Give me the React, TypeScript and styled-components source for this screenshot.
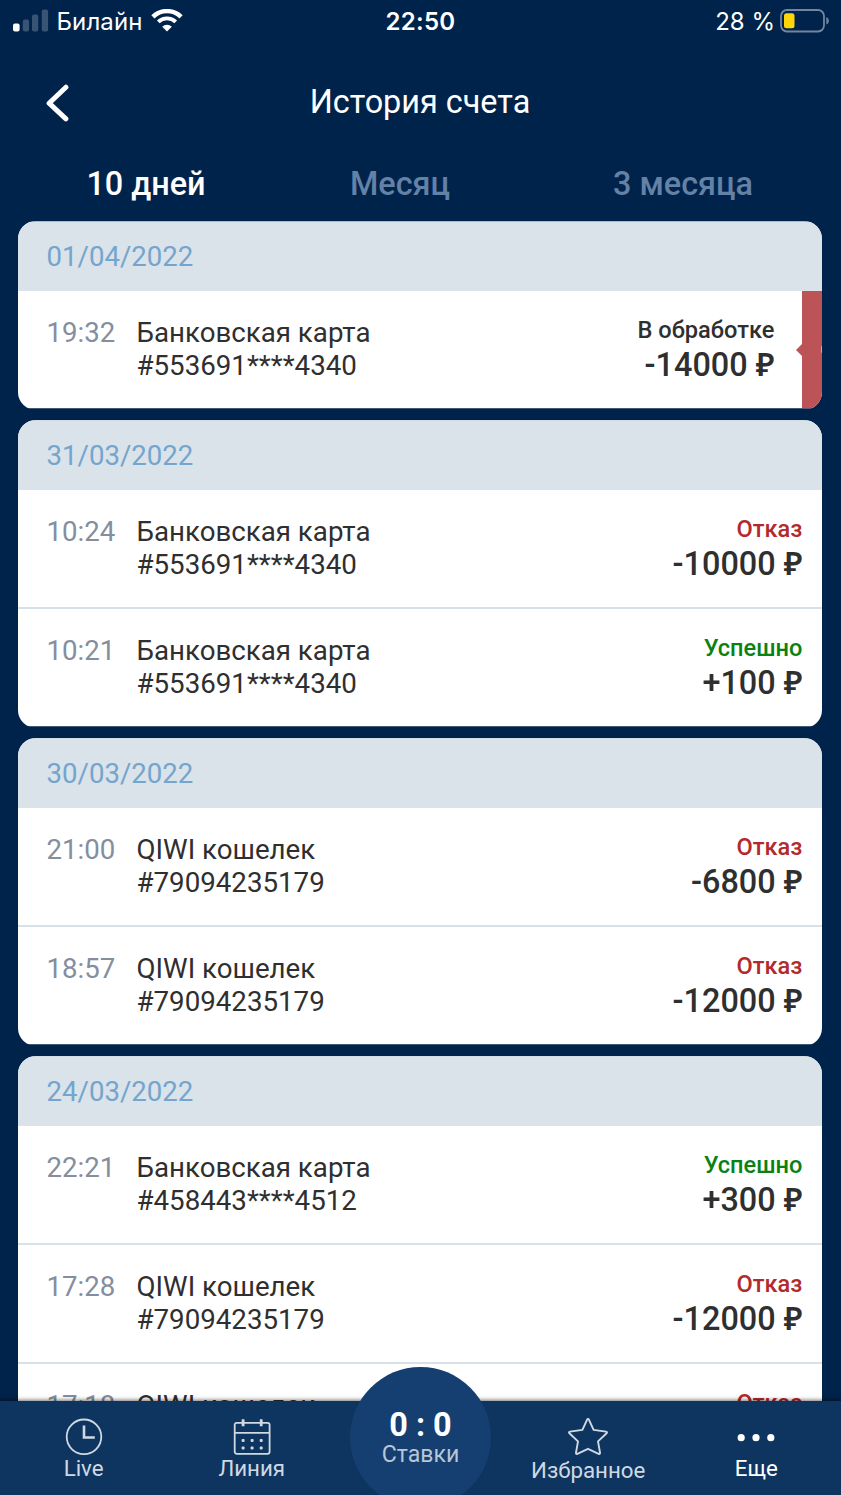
import React from 'react';
import styled, { createGlobalStyle } from 'styled-components';

const GlobalStyle = createGlobalStyle`
  * { box-sizing: border-box; }
  html, body { margin: 0; padding: 0; background: #00234b; }
  body { font-family: Roboto, "Open Sans", sans-serif; overflow: hidden; }
`;

const Screen = styled.div`
  position: relative;
  display: flex;
  flex-direction: column;
  width: 841px;
  height: 1495px;
  overflow: hidden;
  background: #00234b;
`;

const StatusBar = styled.div`
  display: grid;
  grid-template-columns: 1fr auto 1fr;
  align-items: center;
  flex: none;
  height: 42px;
  padding: 0 11px 0 13px;
  color: #fff;
  font-family: Inter, "Liberation Sans", sans-serif;
  font-size: 24px;
  line-height: 40px;
`;

const StatusSide = styled.div<{ $end?: boolean }>`
  display: flex;
  align-items: center;
  justify-content: ${(p) => (p.$end ? 'flex-end' : 'flex-start')};
  svg { display: block; flex: none; margin-bottom: 1px; }
`;

const Carrier = styled.span`
  margin: 1px 9px 0 7.5px;
  letter-spacing: 0.1px;
`;

const Clock = styled.span`
  margin: 1px 2px 0 0;
  font-weight: 600;
  letter-spacing: 0.3px;
`;

const Charge = styled.span`
  margin: 1px 5px 0 0;
`;

const Header = styled.header`
  display: grid;
  grid-template-columns: 100px 1fr 100px;
  align-items: center;
  flex: none;
  height: 118px;
`;

const BackButton = styled.button`
  display: flex;
  padding: 3px 0 0 44px;
  border: 0;
  background: none;
`;

const Title = styled.h1`
  margin: 2px 1px 0 0;
  color: #fff;
  font-size: 32.4px;
  font-weight: 400;
  line-height: 40px;
  text-align: center;
`;

const Periods = styled.nav`
  display: grid;
  grid-template-columns: 256px 252px 314px;
  flex: none;
  height: 61px;
  padding: 4px 0 0 18px;
`;

const Period = styled.button<{ $active?: boolean }>`
  height: 40px;
  padding: 0;
  border: 0;
  background: none;
  color: ${(p) => (p.$active ? '#fff' : '#6481a6')};
  font: 500 32.4px/40px Roboto, sans-serif;
`;

const Cards = styled.main`
  display: flex;
  flex-direction: column;
  flex: none;
  gap: 10px;
  padding: 0.4px 18.6px 0 18px;
`;

/* The last two pixels are clipped, so the bottom corners end in a slight kink. */
const Card = styled.section`
  overflow: hidden;
  border-radius: 18px;
  background: #fff;
  clip-path: inset(0 0 2px 0);
`;

const DateBar = styled.h2`
  height: 69.8px;
  margin: 0;
  padding: 1px 28.5px 0;
  background: #dae2ea;
  color: #74a5cc;
  font-size: 27.6px;
  font-weight: 400;
  line-height: 69.6px;
`;

const Row = styled.div`
  display: flex;
  height: 119.1px;
  padding: 25px 20px 0 28.5px;
  border-bottom: 2px solid #d8e1ea;
  &:last-child { border-bottom-color: transparent; }
`;

const Time = styled.div`
  width: 90px;
  color: #848e9e;
  font-size: 27.6px;
  line-height: 33px;
`;

const Method = styled.div`
  flex: 1;
  color: #2f2f2f;
  font-size: 27.7px;
  line-height: 33px;
`;

const Result = styled.div`
  text-align: right;
  font-weight: 500;
`;

const tones = { wait: '#2f2f2f', fail: '#b32a2e', done: '#0a8212' };
type Tone = keyof typeof tones;

const State = styled.div<{ $tone: Tone }>`
  height: 30px;
  color: ${(p) => tones[p.$tone]};
  font-size: 23.6px;
  line-height: 28px;
`;

const Amount = styled.div`
  color: #2f2f2f;
  font-size: 32.4px;
  line-height: 39px;
`;

const Currency = styled.span`
  font-family: "Noto Sans", sans-serif;
  font-weight: 600;
  font-size: 31.5px;
  line-height: 1;
`;

const CancelHandle = styled.div`
  position: relative;
  width: 20px;
  height: 120px;
  margin: -25px -20px 0 28px;
  background: #bc5457;
  overflow: visible;
  &::before {
    content: '';
    position: absolute;
    left: -6px;
    top: 53px;
    border: 6px solid transparent;
    border-left-width: 0;
    border-right-color: #bc5457;
  }
  &::after {
    content: '';
    position: absolute;
    right: 0;
    top: 55px;
    width: 1.5px;
    height: 7px;
    border-radius: 2px 0 0 2px;
    background: #dca5a7;
  }
`;

const TabBar = styled.nav`
  position: absolute;
  left: 0;
  right: 0;
  bottom: 0;
  display: grid;
  grid-template-columns: repeat(5, 1fr);
  height: 94px;
  background: #0e355f;
  box-shadow: 0 -1px 4px rgba(0, 0, 0, 0.55);
`;

const Tab = styled.button<{ $bright?: boolean }>`
  display: flex;
  flex-direction: column;
  align-items: center;
  padding: 15px 1px 0 0;
  border: 0;
  background: none;
  color: ${(p) => (p.$bright ? '#fff' : '#d0d9e3')};
  font: 400 22.3px/28px Roboto, sans-serif;
  white-space: nowrap;
  svg { display: block; flex: none; height: 39px; }
`;

const TabLabel = styled.span<{ $drop?: number }>`
  margin-top: ${(p) => (p.$drop ?? 0) - 1}px;
`;

const BetSlip = styled.button`
  display: flex;
  flex-direction: column;
  align-items: center;
  justify-self: center;
  width: 141px;
  height: 141px;
  margin-top: -34px;
  padding: 41.5px 0 0;
  border: 0;
  border-radius: 50%;
  background: #143f70;
  color: #b9c6d6;
  font: 400 23.1px/28px Roboto, sans-serif;
`;

const Score = styled.strong`
  color: #fff;
  font-size: 32.4px;
  font-weight: 700;
  line-height: 32px;
`;

interface Operation {
  time: string;
  method: string;
  account: string;
  state: string;
  tone: Tone;
  amount: string;
  cancellable?: boolean;
}

const card = 'Банковская карта';
const qiwi = 'QIWI кошелек';

const days: { date: string; items: Operation[] }[] = [
  {
    date: '01/04/2022',
    items: [
      { time: '19:32', method: card, account: '#553691****4340', state: 'В обработке', tone: 'wait', amount: '-14000', cancellable: true },
    ],
  },
  {
    date: '31/03/2022',
    items: [
      { time: '10:24', method: card, account: '#553691****4340', state: 'Отказ', tone: 'fail', amount: '-10000' },
      { time: '10:21', method: card, account: '#553691****4340', state: 'Успешно', tone: 'done', amount: '+100' },
    ],
  },
  {
    date: '30/03/2022',
    items: [
      { time: '21:00', method: qiwi, account: '#79094235179', state: 'Отказ', tone: 'fail', amount: '-6800' },
      { time: '18:57', method: qiwi, account: '#79094235179', state: 'Отказ', tone: 'fail', amount: '-12000' },
    ],
  },
  {
    date: '24/03/2022',
    items: [
      { time: '22:21', method: card, account: '#458443****4512', state: 'Успешно', tone: 'done', amount: '+300' },
      { time: '17:28', method: qiwi, account: '#79094235179', state: 'Отказ', tone: 'fail', amount: '-12000' },
      { time: '17:18', method: qiwi, account: '#79094235179', state: 'Отказ', tone: 'fail', amount: '-12000' },
    ],
  },
];

const SignalIcon = () => (
  <svg width="36" height="24" viewBox="0 0 36 24" fill="#fff">
    <rect x="0" y="14.5" width="6.6" height="8" rx="2" />
    <g opacity=".22">
      <rect x="9.8" y="10.5" width="6.3" height="12" rx="2" />
      <rect x="19" y="5.5" width="6.3" height="17" rx="2" />
      <rect x="28.8" y="0.5" width="6.3" height="22" rx="2" />
    </g>
  </svg>
);

const WifiIcon = () => (
  <svg width="32" height="24" viewBox="0 0 32 24" fill="none" stroke="#fff">
    <path d="M1.9 7.9a20 20 0 0 1 28.2 0" strokeWidth="4.5" />
    <path d="M7.3 12.9a12.4 12.4 0 0 1 17.4 0" strokeWidth="3.9" />
    <path d="M16 22.4l-4.8-4.7a6.9 6.9 0 0 1 9.6 0z" fill="#fff" stroke="none" />
  </svg>
);

const BatteryIcon = () => (
  <svg width="50" height="24" viewBox="0 0 50 24">
    <rect x="1" y="1" width="43" height="21.5" rx="6" fill="none" stroke="#74869d" strokeWidth="1.8" />
    <rect x="4" y="4.3" width="10.5" height="15" rx="2.5" fill="#ffd60a" />
    <path d="M46.3 8c3.4 1.4 3.4 6.2 0 7.6z" fill="#74869d" />
  </svg>
);

const BackIcon = () => (
  <svg width="28" height="38" viewBox="0 0 28 38" fill="none" stroke="#fff" strokeWidth="5" strokeLinecap="round" strokeLinejoin="round">
    <path d="M21.9 3.2L5.1 19.2l16.8 15.6" />
  </svg>
);

const ClockIcon = () => (
  <svg width="40" height="40" viewBox="0 0 40 39" fill="none" stroke="#d0d9e3">
    <circle cx="20" cy="20.8" r="17.3" strokeWidth="1.8" />
    <path d="M20 9.5v12h10.8" strokeWidth="2.6" />
  </svg>
);

const CalendarIcon = () => (
  <svg width="40" height="39" viewBox="0 0 40 39" fill="none" stroke="#d0d9e3" strokeWidth="1.8">
    <rect x="2.7" y="6.8" width="34.9" height="31" rx="2" />
    <path d="M2.7 16.8h34.9" />
    <path d="M11.1 3.3v7M29.2 3.3v7" strokeWidth="2.8" />
    <g fill="#d0d9e3" stroke="none">
      {[11.1, 20.1, 29.2].flatMap((x) =>
        [24.4, 32].map((y) => <rect key={`${x}-${y}`} x={x - 1.5} y={y - 1.5} width="3" height="3" rx="1" />),
      )}
    </g>
  </svg>
);

const StarIcon = () => (
  <svg width="42" height="39" viewBox="0 0 42 39" fill="none" stroke="#d0d9e3" strokeWidth="1.9" strokeLinejoin="round">
    <path d="M20 3.8q1-1.8 2 0l4.6 10.1 12.4 1.7q1.6.4.6 1.6l-8.6 8.2 2 11.3q.2 1.8-1.4 1.1L21 32.8l-10.6 5q-1.6.7-1.4-1.1L11 25.4l-8.6-8.2q-1-1.2.6-1.6l12.4-1.7z" />
  </svg>
);

const MoreIcon = () => (
  <svg width="40" height="39" viewBox="0 0 40 39" fill="#fff">
    <circle cx="5.2" cy="21.7" r="3.6" />
    <circle cx="20" cy="21.7" r="3.6" />
    <circle cx="34.8" cy="21.7" r="3.6" />
  </svg>
);

export default function App() {
  return (
    <>
      <GlobalStyle />
      <Screen>
        <StatusBar>
          <StatusSide>
            <SignalIcon />
            <Carrier>Билайн</Carrier>
            <WifiIcon />
          </StatusSide>
          <Clock>22:50</Clock>
          <StatusSide $end>
            <Charge>28 %</Charge>
            <BatteryIcon />
          </StatusSide>
        </StatusBar>
        <Header>
          <BackButton aria-label="Назад"><BackIcon /></BackButton>
          <Title>История счета</Title>
        </Header>
        <Periods>
          <Period $active>10 дней</Period>
          <Period>Месяц</Period>
          <Period>3 месяца</Period>
        </Periods>
        <Cards>
          {days.map((day) => (
            <Card key={day.date}>
              <DateBar>{day.date}</DateBar>
              {day.items.map((op) => (
                <Row key={op.time}>
                  <Time>{op.time}</Time>
                  <Method>
                    {op.method}
                    <br />
                    {op.account}
                  </Method>
                  <Result>
                    <State $tone={op.tone}>{op.state}</State>
                    <Amount>{op.amount} <Currency>₽</Currency></Amount>
                  </Result>
                  {op.cancellable && <CancelHandle />}
                </Row>
              ))}
            </Card>
          ))}
        </Cards>
        <TabBar>
          <Tab><ClockIcon /><TabLabel>Live</TabLabel></Tab>
          <Tab><CalendarIcon /><TabLabel>Линия</TabLabel></Tab>
          <BetSlip>
            <Score>0 : 0</Score>
            <span>Ставки</span>
          </BetSlip>
          <Tab><StarIcon /><TabLabel $drop={2}>Избранное</TabLabel></Tab>
          <Tab $bright><MoreIcon /><TabLabel>Еще</TabLabel></Tab>
        </TabBar>
      </Screen>
    </>
  );
}
